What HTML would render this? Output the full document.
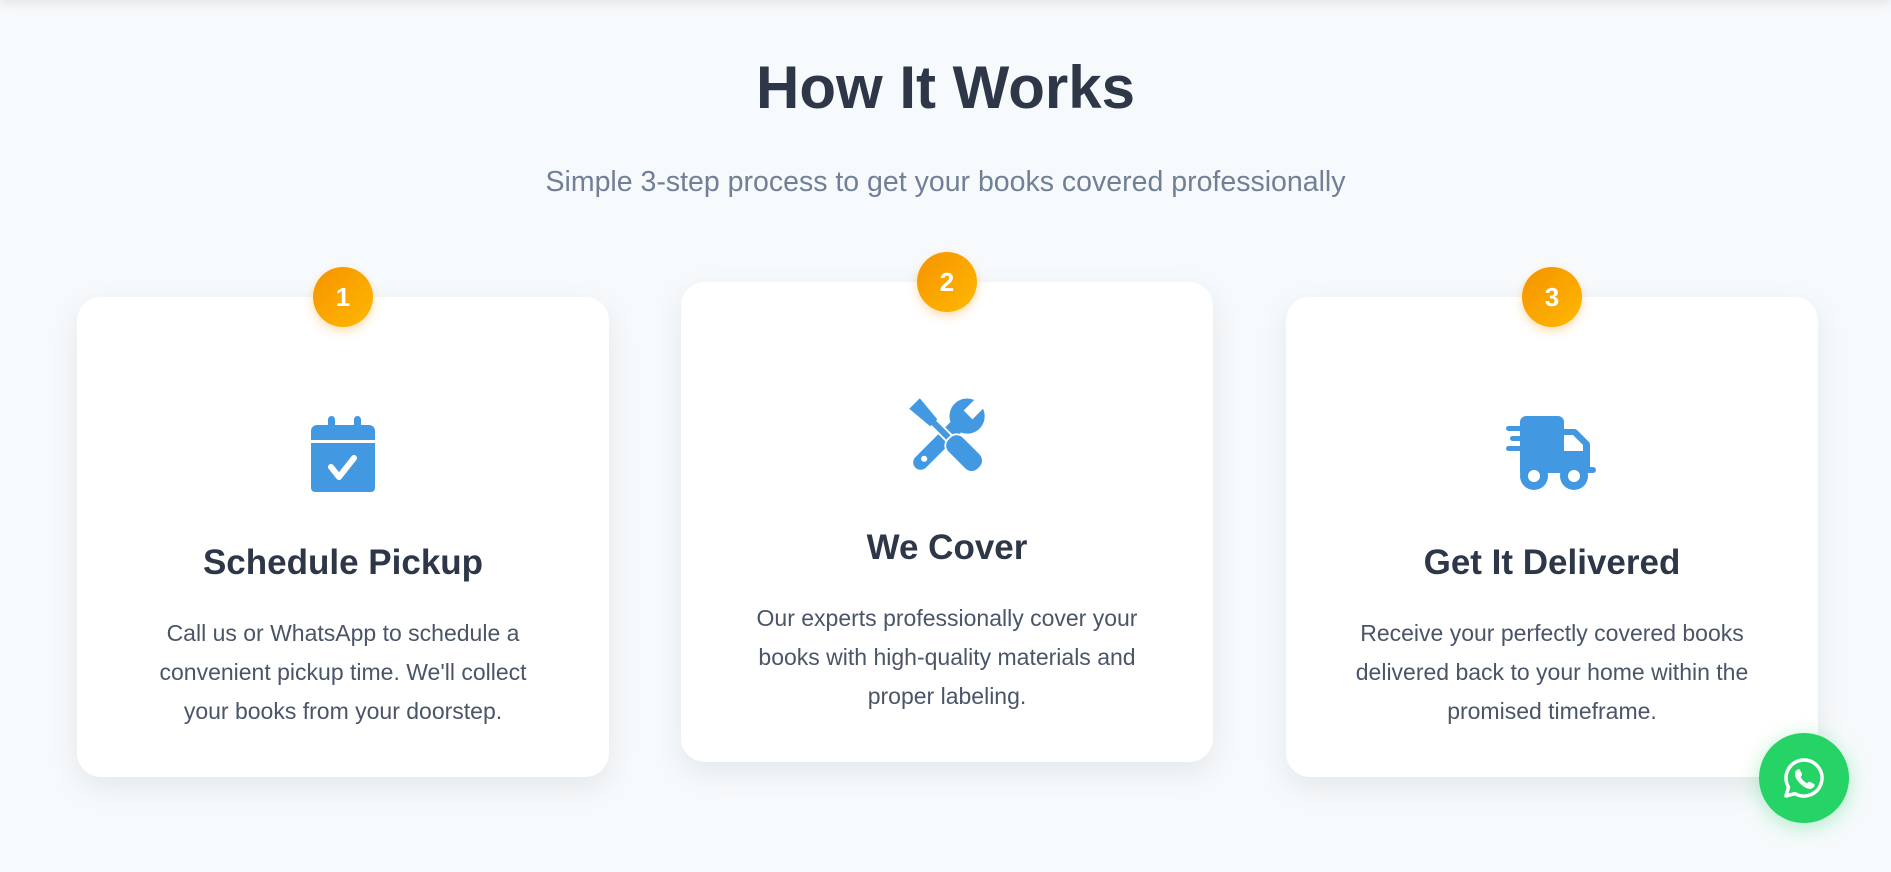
<!DOCTYPE html>
<html><head><meta charset="utf-8"><style>
*{margin:0;padding:0;box-sizing:border-box}
html,body{width:1891px;height:872px;overflow:hidden}
body{background:#f7fafc;font-family:"Liberation Sans",sans-serif;position:relative}
.topbar{position:absolute;left:0;top:-10px;width:100%;height:10px;box-shadow:0 2px 12px rgba(0,0,0,.12)}
h1{position:absolute;top:52px;left:0;width:100%;text-align:center;font-size:60px;line-height:72px;font-weight:700;color:#2d3748}
.sub{position:absolute;top:165px;left:0;width:100%;text-align:center;font-size:28.5px;line-height:34px;color:#718096}
.card{position:absolute;width:532px;height:480px;background:#fff;border-radius:24px;box-shadow:0 10px 30px rgba(0,0,0,.08);text-align:center}
.badge{position:absolute;left:236px;top:-30px;width:60px;height:60px;border-radius:50%;background:linear-gradient(135deg,#f59300,#ffb800);color:#fff;font-weight:700;font-size:26px;line-height:60px;box-shadow:0 4px 10px rgba(245,147,0,.3)}
.icon{position:absolute;left:0;width:100%;top:119px;height:76px}
.icon svg{display:block;margin:0 auto;overflow:visible}
.card h3{position:absolute;left:0;width:100%;top:245px;font-size:35px;line-height:42px;font-weight:700;color:#2d3748}
.card p{position:absolute;left:62px;right:62px;top:317px;font-size:23px;line-height:39px;color:#4a5568}
.wa{position:absolute;left:1759px;top:733px;width:90px;height:90px;border-radius:50%;background:#25d366;box-shadow:0 4px 20px rgba(37,211,102,.35)}
</style></head><body>
<div class="topbar"></div>
<h1>How It Works</h1>
<div class="sub">Simple 3-step process to get your books covered professionally</div>

<div class="card" style="left:77px;top:297px">
<div class="badge">1</div>
<div class="icon"><svg width="64" height="76" viewBox="0 0 64 76"><rect x="17" y="0" width="7" height="14" rx="3.5" fill="#4299e1"/><rect x="43" y="0" width="7" height="14" rx="3.5" fill="#4299e1"/><path d="M0 15a6 6 0 0 1 6-6h52a6 6 0 0 1 6 6v9H0z" fill="#4299e1"/><path d="M0 27h64v45a4 4 0 0 1-4 4H4a4 4 0 0 1-4-4z" fill="#4299e1"/><path d="M20 51l8 10 15-19" stroke="#fff" stroke-width="6" fill="none" stroke-linecap="round" stroke-linejoin="round"/></svg></div>
<h3>Schedule Pickup</h3>
<p>Call us or WhatsApp to schedule a convenient pickup time. We'll collect your books from your doorstep.</p>
</div>

<div class="card" style="left:681px;top:282px">
<div class="badge">2</div>
<div class="icon" style="top:118px"><svg width="72" height="72" viewBox="8 8 58 58">
<g transform="rotate(45 37 37)" fill="#4299e1">
<path d="M23 14a14 14 0 0 1 9-13v12h10V1a14 14 0 0 1 1 26v40a6 6 0 0 1-12 0V27a14 14 0 0 1-8-13z"/>
<circle cx="37" cy="63" r="2.5" fill="#fff"/>
</g>
<g transform="rotate(-45 37 37)">
<path d="M31 0h12l-2 22h-1.5v18h-5V22H33z" fill="#4299e1" stroke="#fff" stroke-width="3" paint-order="stroke"/>
<rect x="29" y="40" width="16" height="33" rx="7" fill="#4299e1" stroke="#fff" stroke-width="3" paint-order="stroke"/>
</g></svg></div>
<h3>We Cover</h3>
<p>Our experts professionally cover your books with high-quality materials and proper labeling.</p>
</div>

<div class="card" style="left:1286px;top:297px">
<div class="badge">3</div>
<div class="icon"><svg width="92" height="76" viewBox="0 0 92 76">
<path d="M14 6a6 6 0 0 1 6-6h32a6 6 0 0 1 6 6v7h10a5 5 0 0 1 4 2l10 10a5 5 0 0 1 2 4v22h3a3 3 0 0 1 0 6H14z" fill="#4299e1"/>
<path d="M58 19h9l10 10v6H58z" fill="#fff"/>
<rect x="0" y="10" width="32" height="5" rx="2.5" fill="#4299e1"/>
<rect x="4" y="20" width="32" height="5" rx="2.5" fill="#4299e1"/>
<rect x="0" y="30" width="28" height="5" rx="2.5" fill="#4299e1"/>
<rect x="14" y="9" width="18" height="28" fill="#4299e1"/>
<circle cx="28" cy="60" r="14" fill="#4299e1"/><circle cx="28" cy="60" r="6" fill="#fff"/>
<circle cx="68" cy="60" r="14" fill="#4299e1"/><circle cx="68" cy="60" r="6" fill="#fff"/></svg></div>
<h3>Get It Delivered</h3>
<p>Receive your perfectly covered books delivered back to your home within the promised timeframe.</p>
</div>

<div class="wa"><svg width="90" height="90" viewBox="0 0 90 90"><path d="M45 27a18 18 0 0 0-15.5 27.2L27 63l9-2.4A18 18 0 1 0 45 27z" fill="none" stroke="#fff" stroke-width="3.5" stroke-linejoin="round"/><path d="M38 37c1-1 2.5-1 3 0l2 4c.4 1-.5 2-1.3 2.7 1.3 3 3.5 5.2 6.5 6.5.7-.8 1.7-1.7 2.7-1.3l4 2c1 .5 1 2 0 3-2 2.5-5 2.5-8 1-4-2-8-6-10-10-1.5-3-1.5-6 1-8z" fill="#fff"/></svg></div>
</body></html>
